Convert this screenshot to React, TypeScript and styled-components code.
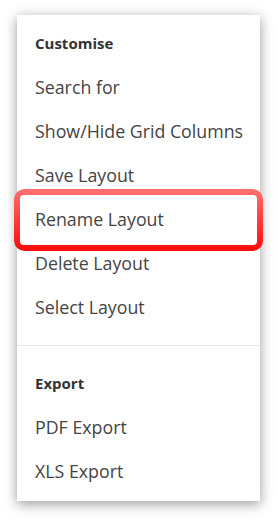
import { createGlobalStyle } from 'styled-components';
import styled from 'styled-components';

const GlobalStyle = createGlobalStyle`
  html, body {
    margin: 0;
    padding: 0;
    background: #ffffff;
  }
  body {
    font-family: 'Open Sans', 'Liberation Sans', sans-serif;
  }
`;

const Page = styled.div`
  width: 277px;
  height: 522px;
  box-sizing: border-box;
  padding: 15px 17px;
`;

const Menu = styled.div`
  width: 243px;
  box-sizing: border-box;
  background: #ffffff;
  padding: 6px 0 8px;
  box-shadow: 0 3px 12px rgba(0, 0, 0, 0.4);
`;

const Section = styled.div`
  display: flex;
  flex-direction: column;
`;

const Heading = styled.div`
  height: 44px;
  display: flex;
  align-items: center;
  padding: 0 18px;
  font-size: 15px;
  font-weight: 700;
  color: #333333;
`;

const Item = styled.div<{ highlighted?: boolean }>`
  position: relative;
  height: 44px;
  display: flex;
  align-items: center;
  padding: 0 18px;
  font-size: 17.8px;
  color: #444444;
  white-space: nowrap;

  ${(props) =>
    props.highlighted &&
    `
    &::after {
      content: '';
      position: absolute;
      top: -8px;
      bottom: -10px;
      left: -3px;
      right: -3px;
      border: 6px solid transparent;
      border-radius: 10px;
      background: linear-gradient(#ff7070, #ff0a0a) border-box;
      -webkit-mask: linear-gradient(#000 0 0) padding-box, linear-gradient(#000 0 0);
      -webkit-mask-composite: xor;
      mask-composite: exclude;
      filter: drop-shadow(0 1px 2px rgba(0, 0, 0, 0.25));
    }
  `}
`;

const Divider = styled.hr`
  border: none;
  border-top: 1px solid #e6e6e6;
  margin: 16px 0 15px;
`;

const customise = [
  'Search for',
  'Show/Hide Grid Columns',
  'Save Layout',
  'Rename Layout',
  'Delete Layout',
  'Select Layout',
];

const exportItems = ['PDF Export', 'XLS Export'];

export default function App() {
  return (
    <>
      <GlobalStyle />
      <Page>
        <Menu>
          <Section>
            <Heading>Customise</Heading>
            {customise.map((label) => (
              <Item key={label} highlighted={label === 'Rename Layout'}>
                {label}
              </Item>
            ))}
          </Section>
          <Divider />
          <Section>
            <Heading>Export</Heading>
            {exportItems.map((label) => (
              <Item key={label}>{label}</Item>
            ))}
          </Section>
        </Menu>
      </Page>
    </>
  );
}
